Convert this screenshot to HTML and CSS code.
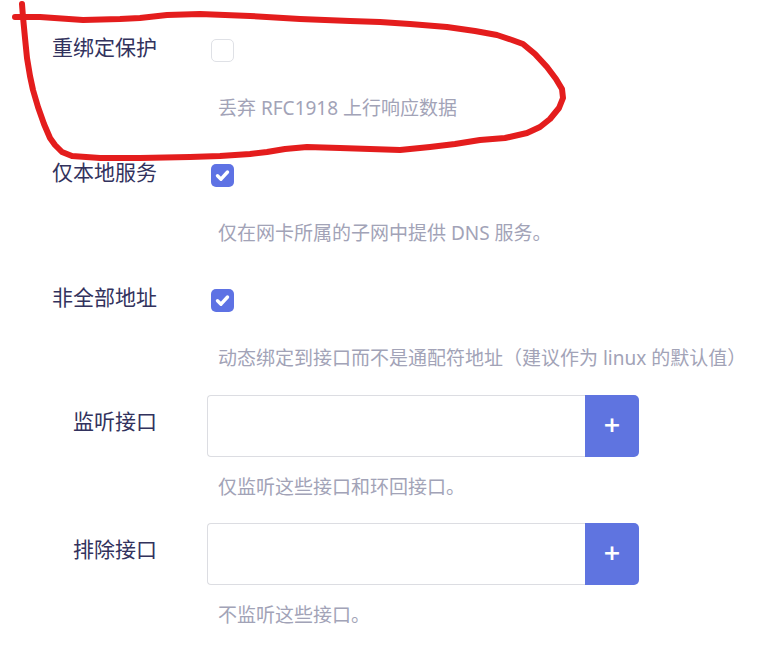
FILE: index.html
```html
<!DOCTYPE html>
<html lang="zh-CN">
<head>
<meta charset="utf-8">
<title>DNS 设置</title>
<link rel="stylesheet" href="styles.css">
</head>
<body>
<div class="form">
  <div class="section">
    <div class="row">
      <div class="label">重绑定保护</div>
      <div class="field"><span class="checkbox"></span></div>
    </div>
    <div class="desc">丢弃 RFC1918 上行响应数据</div>
  </div>
  <div class="section">
    <div class="row">
      <div class="label">仅本地服务</div>
      <div class="field"><span class="checkbox checked"><svg viewBox="0 0 23 23" width="23" height="23"><polyline points="6.5,11.8 10,15.2 16.5,8" fill="none" stroke="#fff" stroke-width="3.4" stroke-linecap="round" stroke-linejoin="round"/></svg></span></div>
    </div>
    <div class="desc">仅在网卡所属的子网中提供 DNS 服务。</div>
  </div>
  <div class="section">
    <div class="row">
      <div class="label">非全部地址</div>
      <div class="field"><span class="checkbox checked"><svg viewBox="0 0 23 23" width="23" height="23"><polyline points="6.5,11.8 10,15.2 16.5,8" fill="none" stroke="#fff" stroke-width="3.4" stroke-linecap="round" stroke-linejoin="round"/></svg></span></div>
    </div>
    <div class="desc">动态绑定到接口而不是通配符地址（建议作为 linux 的默认值）</div>
  </div>
  <div class="section input-section">
    <div class="row">
      <div class="label">监听接口</div>
      <div class="field">
        <div class="input-group"><input class="text" type="text"><button class="add" type="button">+</button></div>
      </div>
    </div>
    <div class="desc">仅监听这些接口和环回接口。</div>
  </div>
  <div class="section input-section">
    <div class="row">
      <div class="label">排除接口</div>
      <div class="field">
        <div class="input-group"><input class="text" type="text"><button class="add" type="button">+</button></div>
      </div>
    </div>
    <div class="desc">不监听这些接口。</div>
  </div>
</div>
<svg class="annotation" width="766" height="170" viewBox="0 0 766 170">
  <path d="M15 17 L40 17 L83 20 L120 19 L140 18 L167 15 L200 14 L250 16 L300 19 L350 21 L380 22 L410 24 L447 27 L475 31 L497 35 L512 40 L523 44 L535 54 L547 67 L556 79 L562 89 L563 98 L559 108 L550 119 L540 127 L527 133 L505 138 L480 140 L455 144 L430 147 L400 150 L370 149 L340 148 L307 147 L285 149 L267 152 L250 154 L220 156 L190 157 L140 158 L100 158 L72 156 L62 152 L55 145 L50 138 L44 124 L38 107 L33 90 L30 76 L27 58 L25 38 L23 17 L22 4" fill="none" stroke="#e41d1d" stroke-width="6" stroke-linecap="round" stroke-linejoin="round"/>
</svg>
</body>
</html>
```
FILE: styles.css
```css
html, body {
  margin: 0;
  padding: 0;
  background: #ffffff;
}

body {
  font-family: "Noto Sans", "Noto Sans CJK SC", sans-serif;
  position: relative;
  width: 766px;
  height: 645px;
  overflow: hidden;
}

.form {
  display: flex;
  flex-direction: column;
  gap: 23px;
  padding-top: 19px;
}

.section {
  display: flex;
  flex-direction: column;
  gap: 14px;
}

.input-section {
  gap: 17px;
}

.section:nth-child(4) {
  margin-top: 1px;
}

.row {
  display: grid;
  grid-template-columns: 157px 432px;
  column-gap: 50px;
  height: 62px;
  align-items: center;
}

.label {
  text-align: right;
  font-size: 21px;
  line-height: 26px;
  color: #32325d;
  padding-bottom: 6px;
}

.input-section .label {
  padding-bottom: 10px;
}

.field {
  display: flex;
  align-items: center;
  height: 62px;
}

.checkbox {
  display: flex;
  width: 23px;
  height: 23px;
  box-sizing: border-box;
  margin-left: 4px;
  border: 1px solid #dfe1e6;
  border-radius: 5px;
  background: #fff;
}

.checkbox.checked {
  border: none;
  background: #5e72e4;
}

.input-group {
  display: flex;
  width: 432px;
  height: 62px;
}

.text {
  flex: 1;
  min-width: 0;
  box-sizing: border-box;
  height: 62px;
  margin: 0;
  border: 1px solid #dcdde2;
  border-right: none;
  border-radius: 4px 0 0 4px;
  background: #fff;
  outline: none;
}

.add {
  width: 54px;
  height: 62px;
  margin: 0;
  padding: 0 0 2px;
  border: none;
  border-radius: 0 5px 5px 0;
  background: #5f74e0;
  color: #fff;
  font-family: "DejaVu Sans", sans-serif;
  font-size: 22px;
  font-weight: bold;
  line-height: 1;
}

.desc {
  margin-left: 218px;
  font-size: 19px;
  line-height: 26px;
  color: #a2a3b7;
  white-space: nowrap;
}

.annotation {
  position: absolute;
  left: 0;
  top: 0;
  pointer-events: none;
}
```
